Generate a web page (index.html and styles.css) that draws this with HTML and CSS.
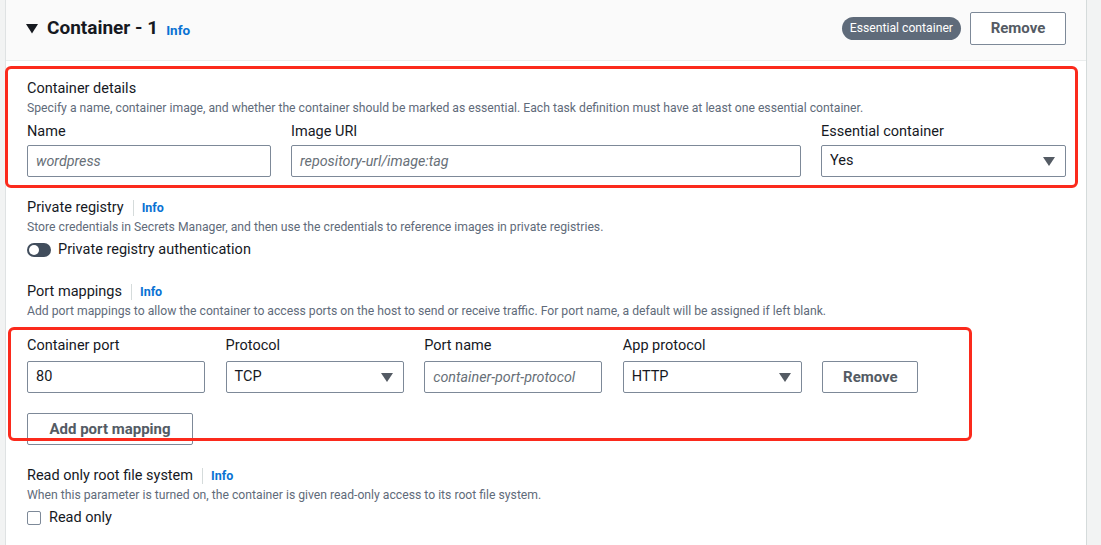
FILE: index.html
```html
<!DOCTYPE html>
<html lang="en">
<head>
<meta charset="utf-8">
<title>Container - 1</title>
<link rel="stylesheet" href="styles.css">
</head>
<body>
<div class="page">
  <section class="panel">
    <header class="panel-head">
      <div class="head-title">
        <svg class="caret" width="12" height="10" viewBox="0 0 12 10"><polygon points="0,0 12,0 6,9.5" fill="#16191f"/></svg>
        <h2 class="title">Container - 1</h2>
        <a class="info info-title">Info</a>
      </div>
      <div class="head-actions">
        <span class="badge">Essential container</span>
        <button class="btn btn-head">Remove</button>
      </div>
    </header>

    <div class="panel-body">
      <div class="group annot annot-details">
        <div class="sec-title">Container details</div>
        <div class="sec-desc">Specify a name, container image, and whether the container should be marked as essential. Each task definition must have at least one essential container.</div>
        <div class="grid-details">
          <div class="field">
            <label class="label">Name</label>
            <div class="input placeholder">wordpress</div>
          </div>
          <div class="field">
            <label class="label">Image URI</label>
            <div class="input placeholder">repository-url/image:tag</div>
          </div>
          <div class="field">
            <label class="label">Essential container</label>
            <div class="input select">Yes<span class="arrow"></span></div>
          </div>
        </div>
      </div>

      <div class="group group-registry">
        <div class="sec-title">Private registry<span class="divider"></span><a class="info">Info</a></div>
        <div class="sec-desc">Store credentials in Secrets Manager, and then use the credentials to reference images in private registries.</div>
        <div class="toggle-row"><span class="toggle"><span class="knob"></span></span>Private registry authentication</div>
      </div>

      <div class="group group-ports">
        <div class="sec-title">Port mappings<span class="divider"></span><a class="info">Info</a></div>
        <div class="sec-desc">Add port mappings to allow the container to access ports on the host to send or receive traffic. For port name, a default will be assigned if left blank.</div>
        <div class="annot annot-ports">
          <div class="grid-ports">
            <div class="field">
              <label class="label">Container port</label>
              <div class="input">80</div>
            </div>
            <div class="field">
              <label class="label">Protocol</label>
              <div class="input select">TCP<span class="arrow"></span></div>
            </div>
            <div class="field">
              <label class="label">Port name</label>
              <div class="input placeholder">container-port-protocol</div>
            </div>
            <div class="field">
              <label class="label">App protocol</label>
              <div class="input select">HTTP<span class="arrow"></span></div>
            </div>
            <div class="field field-btn">
              <button class="btn btn-row">Remove</button>
            </div>
          </div>
          <button class="btn btn-add">Add port mapping</button>
        </div>
      </div>

      <div class="group group-readonly">
        <div class="sec-title">Read only root file system<span class="divider"></span><a class="info">Info</a></div>
        <div class="sec-desc">When this parameter is turned on, the container is given read-only access to its root file system.</div>
        <div class="check-row"><span class="checkbox"></span>Read only</div>
      </div>
    </div>
  </section>
</div>
</body>
</html>
```

FILE: styles.css
```css
* { box-sizing: border-box; }
html, body { margin: 0; padding: 0; }
body {
  background: #f2f3f3;
  font-family: Roboto, "Liberation Sans", sans-serif;
  color: #16191f;
  width: 1101px;
  height: 545px;
  overflow: hidden;
}
.page { padding-left: 5px; }
.panel {
  width: 1082px;
  height: 545px;
  background: #fff;
  border-left: 1px solid #dfe2e3;
  border-right: 1px solid #d5dbdb;
}
.panel-head {
  height: 61px;
  background: #fafafa;
  border-bottom: 1px solid #eaeded;
  display: flex;
  align-items: center;
  justify-content: space-between;
  padding: 0 20px 4px 20px;
}
.head-title { display: flex; align-items: center; }
.caret { margin-right: 9px; margin-top: 1px; }
.title { margin: 0; font-size: 19px; font-weight: 700; line-height: 24px; }
.info {
  color: #0972d3;
  font-weight: 700;
  font-size: 12.5px;
  text-decoration: none;
  line-height: 16px;
}
.info-title { margin-left: 8px; margin-top: 4px; font-size: 13.5px; }
.head-actions { display: flex; align-items: center; }
.badge {
  background: #5f6b7a;
  color: #fff;
  font-size: 12.2px;
  line-height: 23px;
  height: 23px;
  padding: 0 8px;
  border-radius: 12px;
  margin-right: 9px;
}
.btn {
  font-family: inherit;
  background: #fff;
  border: 1px solid #7d8998;
  border-radius: 2px;
  color: #545b64;
  font-weight: 700;
  font-size: 15px;
  padding: 0;
  cursor: pointer;
}
.btn-head { width: 96px; height: 33px; }

.panel-body { padding: 18px 20px 0 21px; }
.group { position: relative; }
.sec-title {
  font-size: 14.5px;
  line-height: 20px;
  display: flex;
  align-items: center;
}
.sec-desc {
  font-size: 12.2px;
  line-height: 18px;
  color: #5f6b7a;
}
.divider {
  width: 1px;
  height: 16px;
  background: #d5dbdb;
  margin: 0 8px 0 9px;
}
.label {
  display: block;
  font-size: 14.5px;
  line-height: 20px;
  margin-bottom: 5px;
}
.grid-details {
  display: grid;
  grid-template-columns: 244px 510px 1fr;
  column-gap: 20px;
  margin-top: 5px;
}
.grid-details .label { margin-bottom: 3px; }
.input {
  position: relative;
  height: 32px;
  border: 1px solid #7d8998;
  border-radius: 2px;
  padding: 0 8px;
  font-size: 14.5px;
  line-height: 30px;
  color: #16191f;
  white-space: nowrap;
  overflow: hidden;
}
.placeholder { color: #687078; font-style: italic; font-size: 14.3px; }
.select { padding-right: 32px; }
.arrow {
  position: absolute;
  right: 10px;
  top: 11px;
  width: 0;
  height: 0;
  border-left: 6px solid transparent;
  border-right: 6px solid transparent;
  border-top: 9px solid #545b64;
}

.group-registry { margin-top: 21px; }
.toggle-row {
  margin-top: 4px;
  display: flex;
  align-items: center;
  font-size: 14.5px;
  line-height: 20px;
}
.toggle {
  width: 24px;
  height: 14px;
  border-radius: 7px;
  background: #414d5c;
  margin-right: 7px;
  position: relative;
  display: inline-block;
}
.knob {
  position: absolute;
  left: 2px;
  top: 2px;
  width: 10px;
  height: 10px;
  border-radius: 50%;
  background: #fff;
}

.group-ports { margin-top: 22px; }
.annot-ports { margin-top: 16px; position: relative; }
.grid-ports {
  display: grid;
  grid-template-columns: 178px 178px 178px 179px 96px;
  column-gap: 20.6px;
}
.field-btn { display: flex; align-items: flex-end; }
.btn-row { width: 96px; height: 32px; }
.btn-add { margin-top: 20px; width: 166px; height: 32px; }

.group-readonly { margin-top: 21px; }
.check-row {
  margin-top: 4px;
  display: flex;
  align-items: center;
  font-size: 14.5px;
  line-height: 20px;
}
.checkbox {
  width: 14px;
  height: 14px;
  border: 1.5px solid #7d8998;
  border-radius: 2px;
  margin-right: 8px;
  display: inline-block;
}

/* red annotation outlines drawn over the content */
.annot { position: relative; }
.annot::after {
  content: "";
  position: absolute;
  border: 3px solid #fb2a1c;
  border-radius: 6px;
  pointer-events: none;
}
.annot-details::after { top: -13px; left: -22px; right: -12px; bottom: -11px; }
.annot-ports::after { top: -9px; left: -19px; right: 94px; bottom: 4px; }
```
